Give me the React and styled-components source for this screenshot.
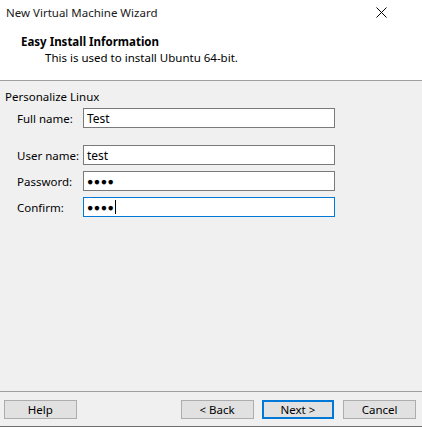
import React from "react";
import styled, { createGlobalStyle } from "styled-components";

const Global = createGlobalStyle`
  html, body {
    margin: 0;
    padding: 0;
    background: #f0f0f0;
  }
  * {
    box-sizing: border-box;
  }
`;

const Window = styled.div`
  width: 422px;
  height: 427px;
  display: flex;
  flex-direction: column;
  background: #f0f0f0;
  font-family: "Noto Sans", "Open Sans", sans-serif;
  font-size: 11.5px;
  color: #000;
  border-bottom: 1px solid #6d6d6d;
`;

const TitleBar = styled.div`
  height: 26px;
  display: flex;
  align-items: center;
  justify-content: space-between;
  padding: 0 35px 2px 6px;
  background: #fff;
`;

const Title = styled.div`
  font-size: 11.5px;
  color: #1a1a1a;
`;

const Header = styled.div`
  height: 55px;
  background: #fff;
  border-bottom: 1px solid #a0a0a0;
  padding: 8px 0 0 21px;
  display: flex;
  flex-direction: column;
`;

const HeaderTitle = styled.div`
  font-weight: bold;
  line-height: 16px;
`;

const HeaderSub = styled.div`
  padding-left: 24px;
  line-height: 16px;
`;

const Body = styled.div`
  flex: 1;
  padding: 8px 0 0 5px;
  display: flex;
  flex-direction: column;
`;

const GroupLabel = styled.div`
  line-height: 16px;
  margin-bottom: 3px;
`;

const Row = styled.div`
  display: flex;
  align-items: center;
  height: 20px;
  margin-top: ${(p) => p.$gap || 0}px;
`;

const Label = styled.div`
  width: 66px;
  margin-left: 12px;
  white-space: nowrap;
`;

const Field = styled.div`
  width: 252px;
  height: 20px;
  background: #fff;
  border: 1px solid ${(p) => (p.$focused ? "#0078d7" : "#7a7a7a")};
  display: flex;
  align-items: center;
  padding-left: 3px;
  font-size: 12px;
`;

const Dots = styled.span`
  font-size: 10.5px;
  letter-spacing: 0.5px;
`;

const Caret = styled.span`
  display: inline-block;
  width: 1px;
  height: 14px;
  background: #000;
  margin-left: 1px;
`;

const Footer = styled.div`
  height: 35px;
  border-top: 1px solid #a0a0a0;
  display: flex;
  align-items: flex-start;
  padding: 8px 6px 0 4px;
`;

const Button = styled.button`
  width: 73px;
  height: 19px;
  background: #e1e1e1;
  border: ${(p) => (p.$default ? "2px solid #0078d7" : "1px solid #adadad")};
  font-family: "Noto Sans", "Open Sans", sans-serif;
  font-size: 11.5px;
  color: #000;
  padding: 0;
  margin-left: ${(p) => p.$ml || 0}px;
  line-height: 1;
`;

export default function App() {
  return (
    <>
      <Global />
      <Window>
        <TitleBar>
          <Title>New Virtual Machine Wizard</Title>
          <svg width="11" height="11" viewBox="0 0 11 11">
            <path d="M0.5 0.5 L10.5 10.5 M10.5 0.5 L0.5 10.5" stroke="#000" strokeWidth="1" />
          </svg>
        </TitleBar>
        <Header>
          <HeaderTitle>Easy Install Information</HeaderTitle>
          <HeaderSub>This is used to install Ubuntu 64-bit.</HeaderSub>
        </Header>
        <Body>
          <GroupLabel>Personalize Linux</GroupLabel>
          <Row>
            <Label>Full name:</Label>
            <Field>Test</Field>
          </Row>
          <Row $gap={17}>
            <Label>User name:</Label>
            <Field>test</Field>
          </Row>
          <Row $gap={6}>
            <Label>Password:</Label>
            <Field>
              <Dots>●●●●</Dots>
            </Field>
          </Row>
          <Row $gap={6}>
            <Label>Confirm:</Label>
            <Field $focused>
              <Dots>●●●●</Dots>
              <Caret />
            </Field>
          </Row>
        </Body>
        <Footer>
          <Button>Help</Button>
          <Button $ml={104}>&lt; Back</Button>
          <Button $ml={8} $default>Next &gt;</Button>
          <Button $ml={9}>Cancel</Button>
        </Footer>
      </Window>
    </>
  );
}
